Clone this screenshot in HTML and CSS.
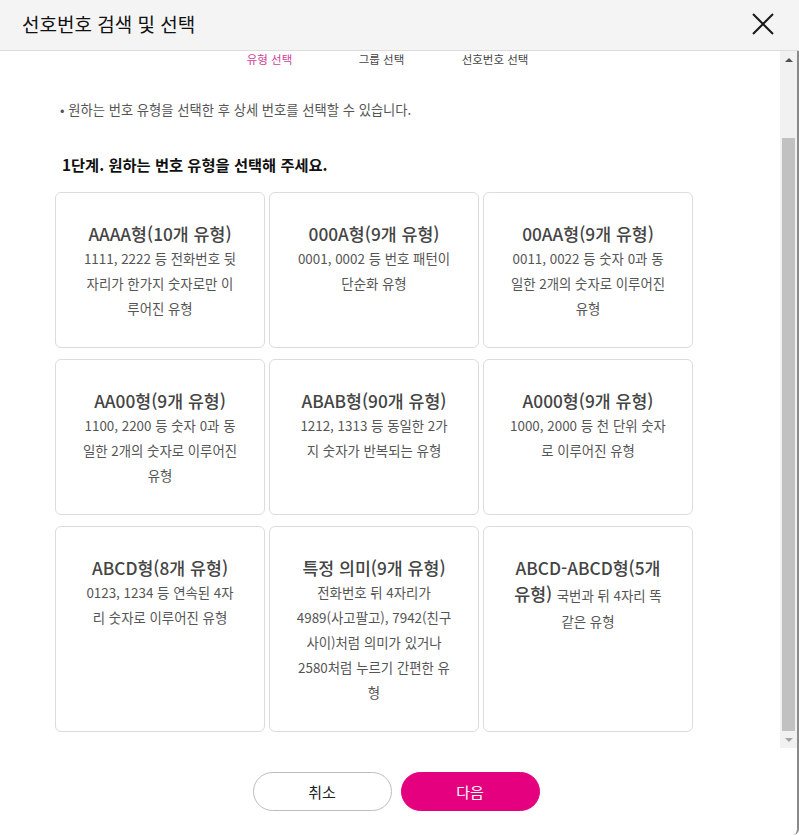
FILE: index.html
```html
<!DOCTYPE html>
<html lang="ko">
<head>
<meta charset="utf-8">
<title>선호번호 검색 및 선택</title>
<link rel="stylesheet" href="styles.css">
</head>
<body>
<div class="modal">
  <div class="header">
    <h1 class="title">선호번호 검색 및 선택</h1>
    <button class="close" aria-label="닫기">
      <svg width="22" height="22" viewBox="0 0 22 22"><path d="M1 1 L21 21 M21 1 L1 21" stroke="#1a1a1a" stroke-width="2" fill="none"/></svg>
    </button>
  </div>
  <div class="body">
    <div class="scrollwrap">
      <div class="content">
        <div class="tabs">
          <span class="tab active">유형 선택</span>
          <span class="tab">그룹 선택</span>
          <span class="tab">선호번호 선택</span>
        </div>
        <p class="notice">• 원하는 번호 유형을 선택한 후 상세 번호를 선택할 수 있습니다.</p>
        <h2 class="step">1단계. 원하는 번호 유형을 선택해 주세요.</h2>
        <div class="grid">
          <div class="card"><strong class="ct">AAAA형(10개 유형)</strong><span class="cd">1111, 2222 등 전화번호 뒷자리가 한가지 숫자로만 이루어진 유형</span></div>
          <div class="card"><strong class="ct">000A형(9개 유형)</strong><span class="cd">0001, 0002 등 번호 패턴이 단순화 유형</span></div>
          <div class="card"><strong class="ct">00AA형(9개 유형)</strong><span class="cd">0011, 0022 등 숫자 0과 동일한 2개의 숫자로 이루어진 유형</span></div>
          <div class="card"><strong class="ct">AA00형(9개 유형)</strong><span class="cd">1100, 2200 등 숫자 0과 동일한 2개의 숫자로 이루어진 유형</span></div>
          <div class="card"><strong class="ct">ABAB형(90개 유형)</strong><span class="cd">1212, 1313 등 동일한 2가지 숫자가 반복되는 유형</span></div>
          <div class="card"><strong class="ct">A000형(9개 유형)</strong><span class="cd">1000, 2000 등 천 단위 숫자로 이루어진 유형</span></div>
          <div class="card"><strong class="ct">ABCD형(8개 유형)</strong><span class="cd">0123, 1234 등 연속된 4자리 숫자로 이루어진 유형</span></div>
          <div class="card"><strong class="ct">특정 의미(9개 유형)</strong><span class="cd">전화번호 뒤 4자리가 4989(사고팔고), 7942(친구사이)처럼 의미가 있거나 2580처럼 누르기 간편한 유형</span></div>
          <div class="card"><strong class="ct inline">ABCD-ABCD형(5개 유형)</strong> <span class="cd inline">국번과 뒤 4자리 똑같은 유형</span></div>
        </div>
      </div>
      <div class="scrollbar">
        <div class="sb-btn"><span class="arrow-up"></span></div>
        <div class="sb-track"><div class="sb-thumb"></div></div>
        <div class="sb-btn"><span class="arrow-down"></span></div>
      </div>
    </div>
    <div class="footer">
      <button class="btn btn-cancel">취소</button>
      <button class="btn btn-next">다음</button>
    </div>
  </div>
</div>
</body>
</html>
```

FILE: styles.css
```css
* { box-sizing: border-box; }
html, body { margin: 0; padding: 0; background: #fff; }
body {
  font-family: "Noto Sans CJK KR", "Noto Sans", sans-serif;
  color: #222;
}
.modal {
  width: 799px;
  height: 835px;
  display: flex;
  flex-direction: column;
  overflow: hidden;
}
.header {
  height: 51px;
  flex: none;
  background: #f4f4f4;
  border-bottom: 1px solid #dcdcdc;
  display: flex;
  align-items: center;
  justify-content: space-between;
  padding: 0 25px 2px 22px;
}
.title {
  margin: 0;
  font-size: 19px;
  font-weight: 400;
  color: #111;
  line-height: 24px;
}
.close {
  border: 0;
  background: none;
  padding: 0;
  width: 22px;
  height: 22px;
  display: flex;
}
.body {
  flex: 1;
  display: flex;
  flex-direction: column;
  border-right: 2px solid #8a8a8a;
  border-bottom-right-radius: 6px;
}
.scrollwrap {
  height: 697px;
  flex: none;
  display: flex;
}
.content {
  flex: 1;
  overflow: hidden;
  padding: 0 0 0 55px;
}
.tabs {
  display: grid;
  grid-template-columns: 111px 113px 114px;
  margin-left: 159px;
  font-size: 11.5px;
  line-height: 16px;
  color: #444;
}
.tab { text-align: center; }
.tab.active { color: #cf3f97; }
.notice {
  margin: 33px 0 0 5px;
  font-size: 13.3px;
  line-height: 20px;
  color: #555;
}
.step {
  margin: 33px 0 0 7px;
  font-size: 15.3px;
  line-height: 22px;
  font-weight: 700;
  color: #111;
}
.grid {
  margin-top: 17px;
  display: grid;
  grid-template-columns: repeat(3, 210px);
  column-gap: 4px;
  row-gap: 11px;
}
.card {
  border: 1px solid #dcdcdc;
  border-radius: 6px;
  padding: 28px 26px 26px;
  text-align: center;
  line-height: 25px;
}
.ct {
  display: block;
  font-size: 17.3px;
  font-weight: 500;
  color: #444;
}
.cd {
  display: block;
  font-size: 13.4px;
  color: #555;
}
.ct.inline, .cd.inline { display: inline; }
.scrollbar {
  width: 17px;
  flex: none;
  background: #f1f1f1;
  display: flex;
  flex-direction: column;
}
.sb-btn {
  height: 17px;
  flex: none;
  display: flex;
  align-items: center;
  justify-content: center;
}
.arrow-up {
  width: 0; height: 0;
  border-left: 4px solid transparent;
  border-right: 4px solid transparent;
  border-bottom: 4px solid #505050;
}
.arrow-down {
  width: 0; height: 0;
  border-left: 4px solid transparent;
  border-right: 4px solid transparent;
  border-top: 4px solid #a3a3a3;
}
.sb-track {
  flex: 1;
  display: flex;
  flex-direction: column;
  justify-content: flex-end;
  padding: 0 2px;
}
.sb-thumb {
  height: 593px;
  background: #c1c1c1;
}
.footer {
  display: flex;
  justify-content: center;
  gap: 9px;
  padding: 24px 5px 0 0;
}
.btn {
  width: 139px;
  height: 39px;
  border-radius: 20px;
  font-family: inherit;
  font-size: 15px;
  line-height: 20px;
  padding: 0;
}
.btn-cancel {
  background: #fff;
  border: 1px solid #bdbdbd;
  color: #222;
}
.btn-next {
  background: #e4007f;
  border: 1px solid #e4007f;
  color: #fff;
}
```
